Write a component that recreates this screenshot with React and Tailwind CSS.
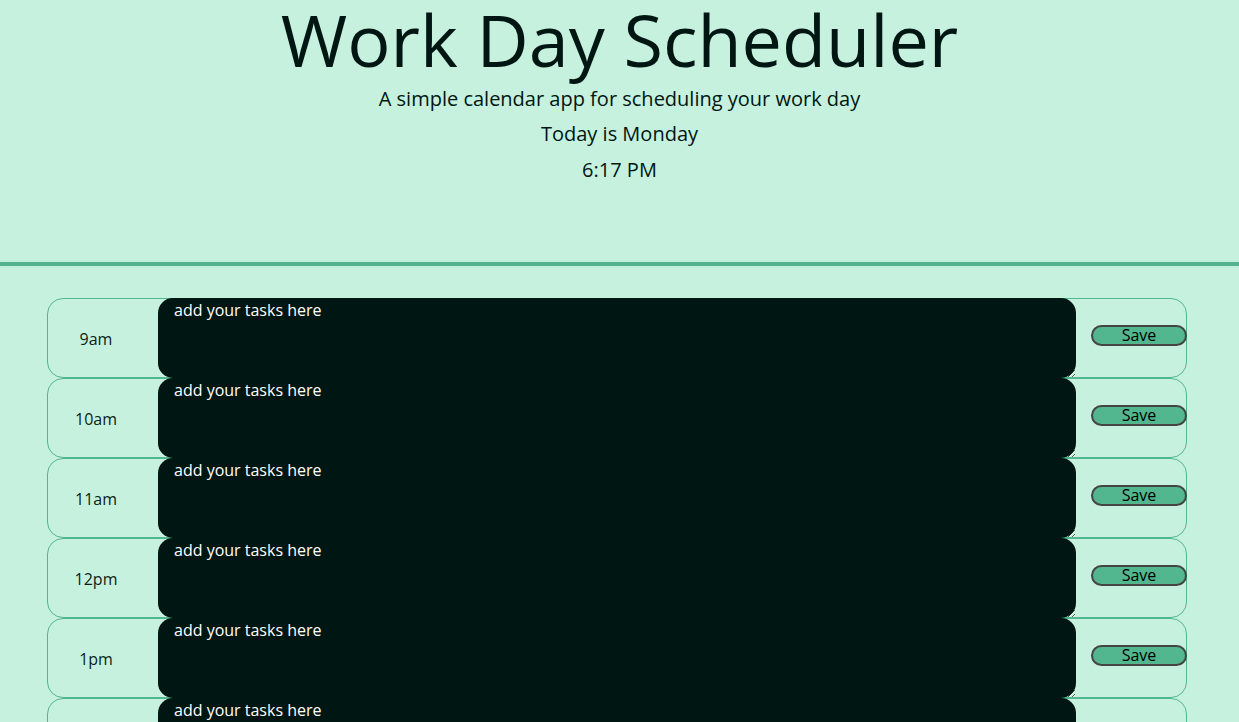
import React from "react";

const hours = ["9am", "10am", "11am", "12pm", "1pm", "2pm", "3pm", "4pm", "5pm"];

const HourRow = ({ hour }) => (
  <div className="flex h-[80px] border border-[#52b78e] rounded-[16px]">
    <div className="w-[110px] shrink-0 flex items-center justify-center pr-[14px] pt-[2px] text-[16px] text-[#0b1f17]">
      {hour}
    </div>
    <textarea
      className="flex-1 -my-px bg-[#001612] text-white text-[16px] leading-[22px] px-[16px] pt-[1px] rounded-[15px] resize-y outline-none placeholder:text-white"
      placeholder="add your tasks here"
    />
    <div className="w-[110px] shrink-0 flex items-center justify-end pb-[6px]">
      <button className="w-[96px] h-[21px] -mr-px bg-[#52b78e] border-2 border-[#444] rounded-full text-[16px] leading-[16px] text-black">
        Save
      </button>
    </div>
  </div>
);

export default function App() {
  return (
    <div className="min-h-screen bg-[#c6f1de] font-['Open_Sans',sans-serif] text-[#001612]">
      {/* Header */}
      <header className="h-[266px] border-b-4 border-[#52b58e] text-center">
        <h1 className="text-[72px] leading-[78px]">Work Day Scheduler</h1>
        <p className="text-[20px] leading-[26px] mt-[8px]">A simple calendar app for scheduling your work day</p>
        <p className="text-[20px] leading-[26px] mt-[9px]">Today is Monday</p>
        <p className="text-[20px] leading-[26px] mt-[10px]">6:17 PM</p>
      </header>

      {/* Hour blocks */}
      <div className="pl-[47px] pr-[52px] pt-[32px] pb-[40px]">
        {hours.map((h) => (
          <HourRow key={h} hour={h} />
        ))}
      </div>
    </div>
  );
}
